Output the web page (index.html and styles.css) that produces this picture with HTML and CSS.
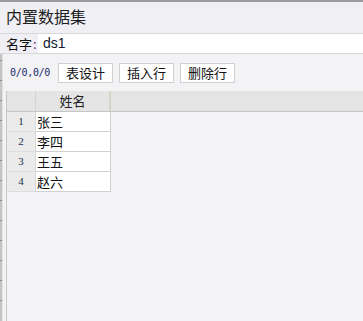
FILE: index.html
```html
<!DOCTYPE html>
<html lang="zh-CN">
<head>
  <meta charset="UTF-8">
  <title>内置数据集</title>
  <link rel="stylesheet" href="styles.css">
</head>
<body>
  <div class="dialog">
    <div class="title">内置数据集</div>

    <div class="name-row">
      <label class="name-label">名字<span class="colon">:</span></label>
      <div class="name-input">ds1</div>
    </div>

    <div class="main">
      <div class="ruler"></div>
      <div class="content">
        <div class="toolbar">
          <span class="pos">0/0,0/0</span>
          <button class="btn">表设计</button>
          <button class="btn">插入行</button>
          <button class="btn">删除行</button>
        </div>

        <div class="grid">
          <div class="grid-head">
            <div class="corner"></div>
            <div class="col-head">姓名</div>
          </div>
          <div class="grid-row"><div class="row-no">1</div><div class="cell">张三</div></div>
          <div class="grid-row"><div class="row-no">2</div><div class="cell">李四</div></div>
          <div class="grid-row"><div class="row-no">3</div><div class="cell">王五</div></div>
          <div class="grid-row"><div class="row-no">4</div><div class="cell">赵六</div></div>
        </div>
      </div>
    </div>
  </div>
</body>
</html>
```

FILE: styles.css
```css
body {
  margin: 0;
  font-family: "Noto Sans CJK SC", "Noto Sans", sans-serif;
  color: #222;
  background-color: #f3f3f6;
  overflow: hidden;
}

.dialog {
  border-top: 2px solid #9a9a9a;
  height: 319px;
  display: flex;
  flex-direction: column;
}

.title {
  height: 31px;
  line-height: 29px;
  padding-left: 6px;
  font-size: 16px;
  background-color: #efeff4;
  color: #1e1e1e;
}

.name-row {
  display: flex;
  align-items: stretch;
  height: 19px;
  border-top: 1px solid #d8d8dc;
  border-bottom: 1px solid #d8d8dc;
  background-color: #efeff4;
}

.name-label {
  width: 32px;
  padding-left: 6px;
  font-size: 13px;
  line-height: 19px;
  color: #111;
}

.colon {
  color: #7a2a8a;
  margin-left: 1px;
}

.name-input {
  flex: 1;
  background-color: #fff;
  padding-left: 5px;
  font-family: "Liberation Sans", "Noto Sans CJK SC", sans-serif;
  font-size: 14px;
  line-height: 19px;
  color: #101830;
}

.main {
  flex: 1;
  display: flex;
}

.ruler {
  width: 2px;
  margin-right: 3px;
  background-color: #c4c4c4;
  background-image: repeating-linear-gradient(to bottom, transparent 0, transparent 9px, #8a8a8a 9px, #8a8a8a 10px, transparent 10px, transparent 20px);
  background-position: 0 -3px;
  border-right: 1px solid #e2e2e2;
}

.content {
  flex: 1;
  display: flex;
  flex-direction: column;
}

.toolbar {
  display: flex;
  align-items: center;
  gap: 6px;
  height: 37px;
  padding-left: 4px;
}

.pos {
  font-family: "DejaVu Sans Mono", monospace;
  font-size: 10px;
  letter-spacing: -0.3px;
  color: #1a2a6a;
  width: 42px;
}

.btn {
  height: 20px;
  padding: 0 7px;
  border: 1px solid #d0d0d0;
  background-color: #fff;
  font-family: "Noto Sans CJK SC", sans-serif;
  font-size: 13px;
  line-height: 17px;
  color: #111;
}

.grid {
  flex: 1;
  border-left: 1px solid #c8c8c8;
}

.grid-head {
  display: flex;
  height: 20px;
  background-color: #e4e4e4;
  border-bottom: 1px solid #c6c6c6;
}

.corner {
  width: 28px;
  border-right: 1px solid #d4d4d4;
}

.col-head {
  width: 73px;
  border-right: 2px solid #d8d4c4;
  text-align: center;
  font-size: 13px;
  line-height: 20px;
}

.grid-row {
  display: flex;
  height: 20px;
}

.row-no {
  width: 28px;
  background-color: #ebebeb;
  border-right: 1px solid #d8d8d8;
  border-bottom: 1px solid #dedede;
  text-align: center;
  font-family: "Liberation Serif", serif;
  font-size: 11px;
  line-height: 19px;
  color: #20304a;
}

.cell {
  width: 73px;
  padding-left: 1px;
  background-color: #fff;
  border-right: 1px solid #d0d0d0;
  border-bottom: 1px solid #d0d0d0;
  font-size: 13px;
  line-height: 19px;
  color: #111;
}
```
